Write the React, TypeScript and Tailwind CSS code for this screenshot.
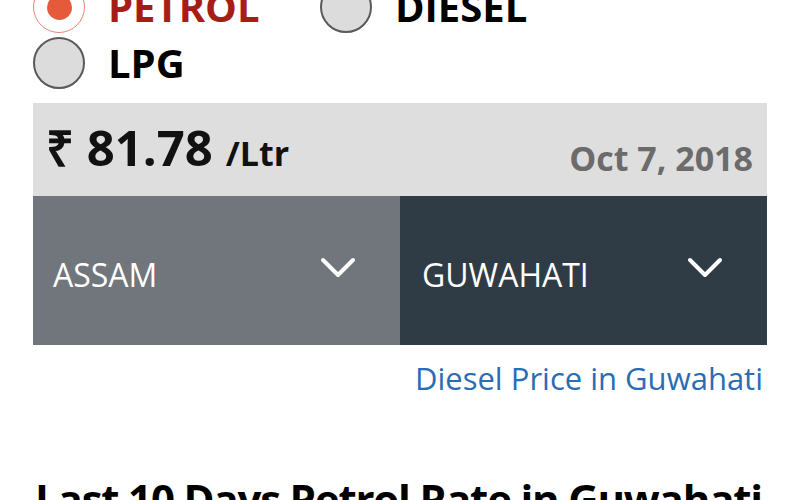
import React from 'react';

function Radio({ checked }: { checked?: boolean }) {
  if (checked) {
    return (
      <span className="flex h-[52px] w-[52px] shrink-0 items-center justify-center rounded-full border-[1.5px] border-[#e3877a] bg-white">
        <span className="h-[25px] w-[25px] rounded-full bg-[#e65a3c]" />
      </span>
    );
  }
  return <span className="h-[52px] w-[52px] shrink-0 rounded-full border-2 border-[#5a5a5a] bg-[#dcdcdc]" />;
}

function Chevron() {
  return (
    <svg width="36" height="22" viewBox="0 0 36 22" className="shrink-0">
      <polyline points="3,3 18,18 33,3" fill="none" stroke="#ffffff" strokeWidth="4" strokeLinecap="round" strokeLinejoin="round" />
    </svg>
  );
}

function Dropdown({ label, dark }: { label: string; dark?: boolean }) {
  return (
    <div className={`flex h-[149px] items-start justify-between pl-[20px] pr-[44px] ${dark ? 'bg-[#2f3c46] pl-[22px]' : 'bg-[#70767c]'}`}>
      <span className="mt-[63px] text-[32px] leading-none text-white">{label}</span>
      <span className="mt-[61px]">
        <Chevron />
      </span>
    </div>
  );
}

export default function App() {
  return (
    <div className="h-[500px] w-[800px] overflow-hidden bg-white font-['Open_Sans',sans-serif]">
      <div className="-mt-[19px] px-[33px]">
        <div className="grid grid-cols-[287px_1fr] gap-y-[4px]">
          <div className="flex items-center gap-[23px]">
            <Radio checked />
            <span className="text-[40px] font-bold leading-none text-[#a61d17]">PETROL</span>
          </div>
          <div className="flex items-center gap-[23px]">
            <Radio />
            <span className="text-[40px] font-bold leading-none text-black">DIESEL</span>
          </div>
          <div className="flex items-center gap-[23px]">
            <Radio />
            <span className="text-[40px] font-bold leading-none text-black">LPG</span>
          </div>
        </div>

        <div className="mt-[14px] flex h-[93px] items-start justify-between bg-[#dedede] pl-[13px] pr-[14px]">
          <div className="mt-[20px] leading-none text-[#111]">
            <span className="text-[49px] font-bold">₹ 81.78</span>
            <span className="ml-[13px] text-[34px] font-bold">/Ltr</span>
          </div>
          <span className="mt-[38px] text-[34px] font-bold leading-none text-[#6b6b6b]">Oct 7, 2018</span>
        </div>

        <div className="grid grid-cols-2">
          <Dropdown label="ASSAM" />
          <Dropdown label="GUWAHATI" dark />
        </div>

        <div className="mt-[18px] flex justify-end pr-[4px]">
          <a className="text-[31px] leading-none text-[#2a6db5]">Diesel Price in Guwahati</a>
        </div>

        <h2 className="mt-[84px] whitespace-nowrap pl-[2px] text-[42px] font-bold leading-none tracking-[-1.2px] text-black">
          Last 10 Days Petrol Rate in Guwahati
        </h2>
      </div>
    </div>
  );
}
